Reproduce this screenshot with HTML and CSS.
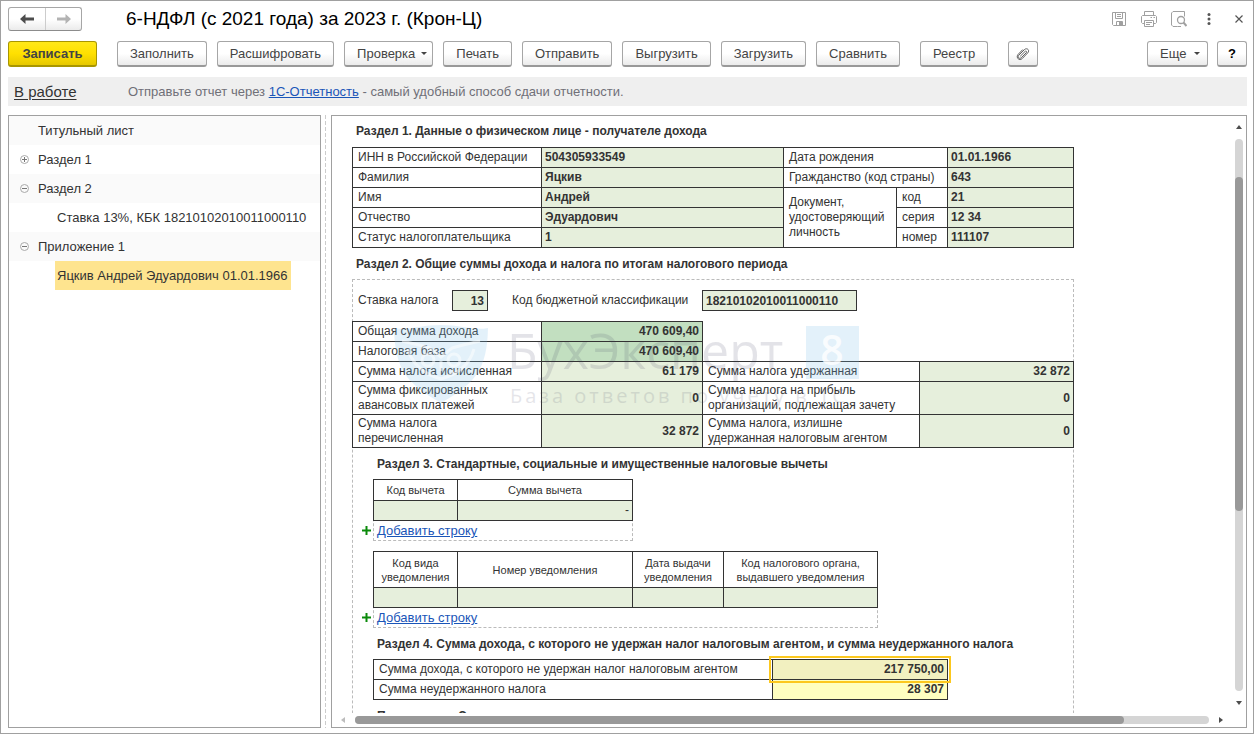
FILE: index.html
```html
<!DOCTYPE html>
<html lang="ru">
<head>
<meta charset="utf-8">
<title>6-НДФЛ (с 2021 года) за 2023 г. (Крон-Ц)</title>
<link rel="stylesheet" href="styles.css">
</head>
<body>
<div class="window">
  <header class="titlebar">
    <div class="nav">
      <button class="nav-btn" aria-label="Назад"><svg width="16" height="12" viewBox="0 0 16 12"><path d="M1 6 6.500 1V4.500H15V7.500H6.500V11Z" fill="#4d4d4d"/></svg></button>
      <button class="nav-btn" aria-label="Вперед"><svg width="16" height="12" viewBox="0 0 16 12"><path d="M15 6 9.500 1V4.500H1V7.500H9.500V11Z" fill="#b3b3b3"/></svg></button>
    </div>
    <h1 class="title">6-НДФЛ (с 2021 года) за 2023 г. (Крон-Ц)</h1>
    <div class="window-tools">
      <button class="icon-btn" aria-label="Сохранить"><svg width="16" height="16" viewBox="0 0 16 16" fill="none" stroke="#a0a0a0"><path d="M1.500 1.500H14.500V14.500H2.500L1.500 13.500Z"/><path d="M4.500 1.500V7.500H11.500V1.500M6 3.500H10M6 5.500H10"/><path d="M5.500 14.500V10.500H11.500V14.500"/><path d="M8 11H11V14H8Z" fill="#a0a0a0" stroke="none"/></svg></button>
      <button class="icon-btn" aria-label="Печать"><svg width="16" height="16" viewBox="0 0 16 16" fill="none" stroke="#a0a0a0"><path d="M3.500 4.500V.5H12.500V4.500M3.500 12.500H1.500L.5 11.500V5.500L1.500 4.500H14.500L15.500 5.500V11.500L14.500 12.500H12.500"/><path d="M3.500 9.500H12.500V15.500H3.500ZM5 11.500H11M5 13.500H9M9.500 6.500H11M12.500 6.500H14"/></svg></button>
      <button class="icon-btn" aria-label="Просмотр"><svg width="16" height="16" viewBox="0 0 16 16" fill="none" stroke="#a0a0a0"><path d="M6.500 15.500H2L.5 14V2L2 .5H13.500V5.500M6.500 15.500H10"/><circle cx="10" cy="9" r="3.500" stroke-width="1.300"/><path d="M12.500 11.500 15.500 15" stroke-width="2"/></svg></button>
      <button class="icon-btn" aria-label="Меню"><svg width="16" height="16" viewBox="0 0 16 16" fill="#555"><circle cx="8" cy="3.500" r="1.500"/><circle cx="8" cy="8" r="1.500"/><circle cx="8" cy="12.500" r="1.500"/></svg></button>
      <button class="icon-btn" aria-label="Закрыть"><svg width="16" height="16" viewBox="0 0 16 16" stroke="#555" stroke-width="1.200"><path d="M4.500 4.500 11.500 11.500M11.500 4.500 4.500 11.500"/></svg></button>
    </div>
  </header>

  <div class="toolbar">
    <button class="btn btn-primary">Записать</button>
    <div class="btn-group">
      <button class="btn">Заполнить</button>
      <button class="btn">Расшифровать</button>
      <button class="btn btn-menu">Проверка<span class="caret"></span></button>
      <button class="btn">Печать</button>
      <button class="btn">Отправить</button>
      <button class="btn">Выгрузить</button>
      <button class="btn">Загрузить</button>
      <button class="btn">Сравнить</button>
    </div>
    <button class="btn">Реестр</button>
    <button class="btn btn-square" aria-label="Файлы"><svg width="14" height="14" viewBox="0 0 14 14" fill="none" stroke="#606060" stroke-linecap="round" stroke-linejoin="round"><path d="M4.500 9 9 4.500C10 3.500 11.300 4.700 10.300 5.700L5.300 10.700C3.500 12.500 1 10 2.800 8.200L8.300 2.700C11 .2 14.200 3.300 11.700 5.900L6.300 11.500C3.500 14.300-.5 10.800 2 7.500L6.500 2.800"/></svg></button>
    <div class="btn-group btn-group-end">
      <button class="btn btn-menu btn-more">Еще<span class="caret"></span></button>
      <button class="btn btn-square btn-help">?</button>
    </div>
  </div>

  <div class="statusbar">
    <a class="state" href="#">В работе</a>
    <p class="notice">Отправьте отчет через <a class="link" href="#">1С-Отчетность</a> - самый удобный способ сдачи отчетности.</p>
  </div>

  <main class="panes">
    <nav class="tree">
      <ul class="tree-list">
        <li class="tree-row"><span class="toggle"></span><span class="node">Титульный лист</span></li>
        <li class="tree-row"><button class="toggle" aria-label="Развернуть"><svg width="9" height="9" viewBox="0 0 9 9" fill="none" stroke="#aaa"><circle cx="4.500" cy="4.500" r="4"/><path d="M2 4.500H7M4.500 2V7" stroke="#777"/></svg></button><span class="node">Раздел 1</span></li>
        <li class="tree-row"><button class="toggle" aria-label="Свернуть"><svg width="9" height="9" viewBox="0 0 9 9" fill="none" stroke="#aaa"><circle cx="4.500" cy="4.500" r="4"/><path d="M2 4.500H7" stroke="#777"/></svg></button><span class="node">Раздел 2</span></li>
        <li class="tree-row tree-child"><span class="node">Ставка 13%, КБК 18210102010011000110</span></li>
        <li class="tree-row"><button class="toggle" aria-label="Свернуть"><svg width="9" height="9" viewBox="0 0 9 9" fill="none" stroke="#aaa"><circle cx="4.500" cy="4.500" r="4"/><path d="M2 4.500H7" stroke="#777"/></svg></button><span class="node">Приложение 1</span></li>
        <li class="tree-row tree-child"><span class="node node-selected">Яцкив Андрей Эдуардович 01.01.1966</span></li>
      </ul>
    </nav>
    <div class="splitter"></div>
    <section class="sheet">
      <div class="page">
        <h2 class="heading">Раздел 1. Данные о физическом лице - получателе дохода</h2>
        <table class="grid">
          <colgroup><col class="w189"><col class="w242"><col class="w113"><col class="w51"><col class="w126"></colgroup>
          <tr><td>ИНН в Российской Федерации</td><td class="value">504305933549</td><td colspan="2">Дата рождения</td><td class="value">01.01.1966</td></tr>
          <tr><td>Фамилия</td><td class="value">Яцкив</td><td colspan="2">Гражданство (код страны)</td><td class="value">643</td></tr>
          <tr><td>Имя</td><td class="value">Андрей</td><td rowspan="3">Документ, удостоверяющий личность</td><td>код</td><td class="value">21</td></tr>
          <tr><td>Отчество</td><td class="value">Эдуардович</td><td>серия</td><td class="value">12 34</td></tr>
          <tr><td>Статус налогоплательщика</td><td class="value">1</td><td>номер</td><td class="value">111107</td></tr>
        </table>

        <h2 class="heading heading-region">Раздел 2. Общие суммы дохода и налога по итогам налогового периода</h2>
        <div class="region">
          <div class="rate">
            <label class="rate-label" for="rate">Ставка налога</label>
            <input class="field field-rate" id="rate" value="13">
            <label class="code-label" for="kbk">Код бюджетной классификации</label>
            <input class="field field-kbk" id="kbk" value="18210102010011000110">
          </div>
          <div class="totals">
            <table class="grid grid-totals">
              <colgroup><col class="w189"><col class="w161"><col class="w217"><col class="w154"></colgroup>
              <tr><td>Общая сумма дохода</td><td class="value num total">470 609,40</td><td class="blank" colspan="2" rowspan="2"></td></tr>
              <tr><td>Налоговая база</td><td class="value num total">470 609,40</td></tr>
              <tr><td>Сумма налога исчисленная</td><td class="value num">61 179</td><td>Сумма налога удержанная</td><td class="value num">32 872</td></tr>
              <tr class="tall"><td>Сумма фиксированных<br>авансовых платежей</td><td class="value num">0</td><td>Сумма налога на прибыль<br>организаций, подлежащая зачету</td><td class="value num">0</td></tr>
              <tr class="tall"><td>Сумма налога<br>перечисленная</td><td class="value num">32 872</td><td>Сумма налога, излишне<br>удержанная налоговым агентом</td><td class="value num">0</td></tr>
            </table>
            <svg class="watermark" width="480" height="90" viewBox="0 0 480 90" aria-hidden="true">
              <path d="M0 3C16 6 24 0 47 0S78 6 94 3C93 44 82 58 47 78C12 58 1 44 0 3Z" fill="#7fc0e6" opacity=".22"/>
              <g fill="none" stroke="#fff" stroke-width="3" opacity=".5"><path d="M8 16Q26 20 36 23L47 32 58 23Q68 20 86 16M14 24Q20 46 47 54Q74 46 80 24"/><circle cx="34" cy="35" r="6"/><circle cx="60" cy="35" r="6"/><path d="M47 36V46"/></g>
              <rect x="412" y="1" width="53" height="53" fill="#7fc0e6" opacity=".22"/>
              <text class="wm-digit" x="438" y="40" text-anchor="middle">8</text>
              <text class="wm-name" x="113" y="44">БухЭксперт</text>
              <text class="wm-sub" x="116" y="78">База ответов по учету в 1С</text>
            </svg>
          </div>

          <div class="inner">
            <h2 class="heading heading-inner">Раздел 3. Стандартные, социальные и имущественные налоговые вычеты</h2>
            <div class="rows rows-deduct">
              <table class="grid">
                <colgroup><col class="w84"><col class="w175"></colgroup>
                <tr><th>Код вычета</th><th>Сумма вычета</th></tr>
                <tr><td class="value"></td><td class="value num dash">-</td></tr>
              </table>
              <div class="add"><svg class="plus" width="9" height="9" viewBox="0 0 9 9"><path d="M4.500 0V9M0 4.500H9" stroke="#0a8a0a" stroke-width="2"/></svg><a class="link" href="#">Добавить строку</a></div>
            </div>
            <div class="rows rows-notice">
              <table class="grid">
                <colgroup><col class="w84"><col class="w175"><col class="w91"><col class="w154"></colgroup>
                <tr class="head-tall"><th>Код вида<br>уведомления</th><th>Номер уведомления</th><th>Дата выдачи<br>уведомления</th><th>Код налогового органа,<br>выдавшего уведомления</th></tr>
                <tr><td class="value"></td><td class="value"></td><td class="value"></td><td class="value"></td></tr>
              </table>
              <div class="add"><svg class="plus" width="9" height="9" viewBox="0 0 9 9"><path d="M4.500 0V9M0 4.500H9" stroke="#0a8a0a" stroke-width="2"/></svg><a class="link" href="#">Добавить строку</a></div>
            </div>
            <h2 class="heading heading-inner">Раздел 4. Сумма дохода, с которого не удержан налог налоговым агентом, и сумма неудержанного налога</h2>
            <table class="grid">
              <colgroup><col class="w399"><col class="w175"></colgroup>
              <tr><td>Сумма дохода, с которого не удержан налог налоговым агентом</td><td class="value num active">217 750,00</td></tr>
              <tr><td>Сумма неудержанного налога</td><td class="value num changed">28 307</td></tr>
            </table>
            <h2 class="heading heading-inner">Приложение. Сведения о доходах</h2>
          </div>
        </div>
      </div>
      <div class="vscroll">
        <svg width="6" height="4" viewBox="0 0 6 4"><path d="M0 4 3 0 6 4Z" fill="#4d4d4d"/></svg>
        <div class="vtrack"><div class="vthumb"></div></div>
        <svg width="6" height="4" viewBox="0 0 6 4"><path d="M0 0 3 4 6 0Z" fill="#4d4d4d"/></svg>
      </div>
      <div class="hscroll">
        <svg width="4" height="6" viewBox="0 0 4 6"><path d="M4 0 0 3 4 6Z" fill="#bdbdbd"/></svg>
        <div class="htrack"><div class="hthumb"></div></div>
        <svg width="4" height="6" viewBox="0 0 4 6"><path d="M0 0 4 3 0 6Z" fill="#4d4d4d"/></svg>
      </div>
    </section>
  </main>
</div>
</body>
</html>
```
FILE: styles.css
```css
* { box-sizing: border-box; }
body { margin: 0; font: 13px/16px "Liberation Sans", Arial, sans-serif; color: #333; background: #fff; }
h1, h2, p, ul { margin: 0; padding: 0; }
button, input { font: inherit; color: inherit; }
.window { display: flex; flex-direction: column; height: 100vh; padding: 6px 6px 5px 7px; border: 1px solid #a0a0a0; }

.titlebar { display: flex; align-items: center; height: 24px; }
.nav { display: flex; height: 24px; border: 1px solid #a6a6a6; border-bottom-color: #8c8c8c; border-radius: 3px; background: linear-gradient(#fff 50%, #ebebeb); }
.nav-btn { display: flex; align-items: center; justify-content: center; width: 36px; padding: 0; border: 0; background: none; }
.nav-btn + .nav-btn { border-left: 1px solid #ccc; }
.title { flex: 1; margin-left: 44px; font-size: 19px; line-height: 24px; font-weight: normal; color: #000; }
.window-tools { display: flex; gap: 14px; }
.icon-btn { display: flex; width: 16px; height: 16px; padding: 0; border: 0; background: none; }

.toolbar { display: flex; gap: 20px; margin-top: 10px; }
.btn-group { display: flex; gap: 10px; }
.btn-group-end { gap: 9px; margin-left: auto; }
.btn { height: 26px; padding: 0 12px; border: 1px solid #a6a6a6; border-bottom: 2px solid #999; border-radius: 3px; background: linear-gradient(#fff 50%, #ebebeb); color: #444; white-space: nowrap; }
.btn-primary { min-width: 89px; border-color: #a89600; background: linear-gradient(#ffe81a, #ffe000 50%, #e6c800); color: #444; font-weight: bold; }
.btn-menu { display: flex; align-items: center; gap: 6px; padding-right: 5px; }
.btn-more { min-width: 61px; gap: 8px; }
.caret { border: 3px solid transparent; border-top-color: #444; border-bottom: 0; }
.btn-square { display: flex; align-items: center; justify-content: center; width: 30px; padding: 0; }
.btn-help { color: #000; font-weight: bold; }

.statusbar { display: flex; align-items: center; margin-top: 10px; padding: 0 6px; height: 29px; background: #efefef; }
.state { width: 114px; font-size: 15px; color: #333; text-underline-offset: 2px; }
.notice { color: #707078; }
.link { color: #1a55b8; }

.panes { flex: 1; display: grid; grid-template: minmax(0, 1fr) / 313px 10px minmax(0, 1fr); min-height: 0; margin-top: 9px; }
.tree, .sheet { border: 1px solid #a0a0a0; }
.splitter { width: 1px; margin-left: 4px; background: repeating-linear-gradient(#ccc 0 4px, #fff 4px 6px); }
.tree-list { list-style: none; }
.tree-row { display: flex; align-items: center; height: 29px; padding-left: 11px; }
.tree-row:nth-child(odd) { background: #fafafa; }
.toggle { display: flex; width: 18px; height: 9px; padding: 0; border: 0; background: none; }
.tree-child { padding-left: 46px; }
.node { line-height: 29px; white-space: nowrap; }
.tree-child .node { padding: 0 3px 0 2px; }
.node-selected { background: #fee48f; }

.sheet { display: grid; grid-template: minmax(0, 1fr) 14px / minmax(0, 1fr) 15px; }
.page { overflow: hidden; padding: 7px 0 0 20px; font-size: 12px; line-height: 15px; }
.heading { padding: 0 4px 7px; font-size: 12px; line-height: 17px; font-weight: bold; white-space: nowrap; }
.grid { border-collapse: separate; border-spacing: 0; table-layout: fixed; width: 0; border: solid #333; border-width: 1px 0 0 1px; }
.grid td, .grid th { height: 20px; padding: 0 3px 0 5px; border: solid #333; border-width: 0 1px 1px 0; font-weight: normal; }
.grid th { height: 21px; padding: 0; font-size: 11px; line-height: 14px; text-align: center; }
.grid .head-tall th { height: 36px; }
.grid .tall td { height: 33px; }
.grid .value { padding-left: 3px; background: #e6efdc; font-weight: bold; }
.grid .num { text-align: right; }
.grid .total { background: #c2dfc0; }
.grid-totals { border-top: 0; }
.grid-totals tr:first-child td { height: 21px; border-top: 1px solid #333; }
.grid-totals tr:first-child .blank { border-top: 0; border-right: 0; }
.grid .changed { background: #ffffc0; }
.grid .dash { font-weight: normal; }
.grid .active { position: relative; background: #f2f0c0; }
.active::after { content: ""; position: absolute; inset: -4px; border: 2px solid #fcc81e; }
.w51 { width: 51px; }
.w84 { width: 84px; }
.w91 { width: 91px; }
.w113 { width: 113px; }
.w126 { width: 126px; }
.w154 { width: 154px; }
.w161 { width: 161px; }
.w175 { width: 175px; }
.w189 { width: 189px; }
.w217 { width: 217px; }
.w242 { width: 242px; }
.w399 { width: 399px; }

.grid + .heading { padding-top: 8px; }
.heading-region { padding-bottom: 6px; }
.region { width: 722px; min-height: 600px; border: 1px dashed #bbb; }
.rate { display: flex; align-items: center; padding: 10px 5px; }
.rate-label { width: 94px; }
.code-label { width: 190px; margin-left: 24px; }
.field { height: 21px; padding: 0 3px; border: 1px solid #333; border-radius: 0; background: #e6efdc; font-weight: bold; }
.field-rate { width: 36px; text-align: right; }
.field-kbk { width: 155px; }
.totals { position: relative; margin: 0 -1px; }
.watermark { position: absolute; left: 42px; top: 4px; overflow: visible; pointer-events: none; }
.wm-digit { font: 600 41px "Open Sans", sans-serif; fill: #fff; opacity: .8; }
.wm-name { font: 50px "Open Sans", sans-serif; fill: #404060; opacity: .14; }
.wm-sub { font: 20px "Open Sans", sans-serif; letter-spacing: 3px; fill: #404060; opacity: .13; }

.inner { padding: 8px 0 0 20px; }
.heading-inner { padding-bottom: 6px; }
.rows { margin-bottom: 10px; border: 1px dashed #bbb; border-top: 0; }
.rows .grid { margin: 0 -1px; }
.rows-deduct { width: 260px; }
.rows-notice { width: 505px; margin-bottom: 8px; }
.add { display: flex; align-items: center; gap: 6px; height: 19px; margin-left: -12px; }
.add .link { font-size: 13px; }

.vscroll { display: flex; flex-direction: column; align-items: center; justify-content: space-between; padding: 9px 0 8px; }
.vtrack { flex: 1; width: 8px; margin: 10px 0; padding-top: 38px; border-radius: 4px; background: #d5d5d5; }
.vthumb { height: 65%; border-radius: 4px; background: #999; }
.hscroll { display: flex; align-items: center; padding: 0 8px 1px 9px; }
.htrack { flex: 1; height: 8px; margin: 0 10px; border-radius: 4px; background: #d5d5d5; }
.hthumb { width: 90%; height: 8px; border-radius: 4px; background: #999; }
```
